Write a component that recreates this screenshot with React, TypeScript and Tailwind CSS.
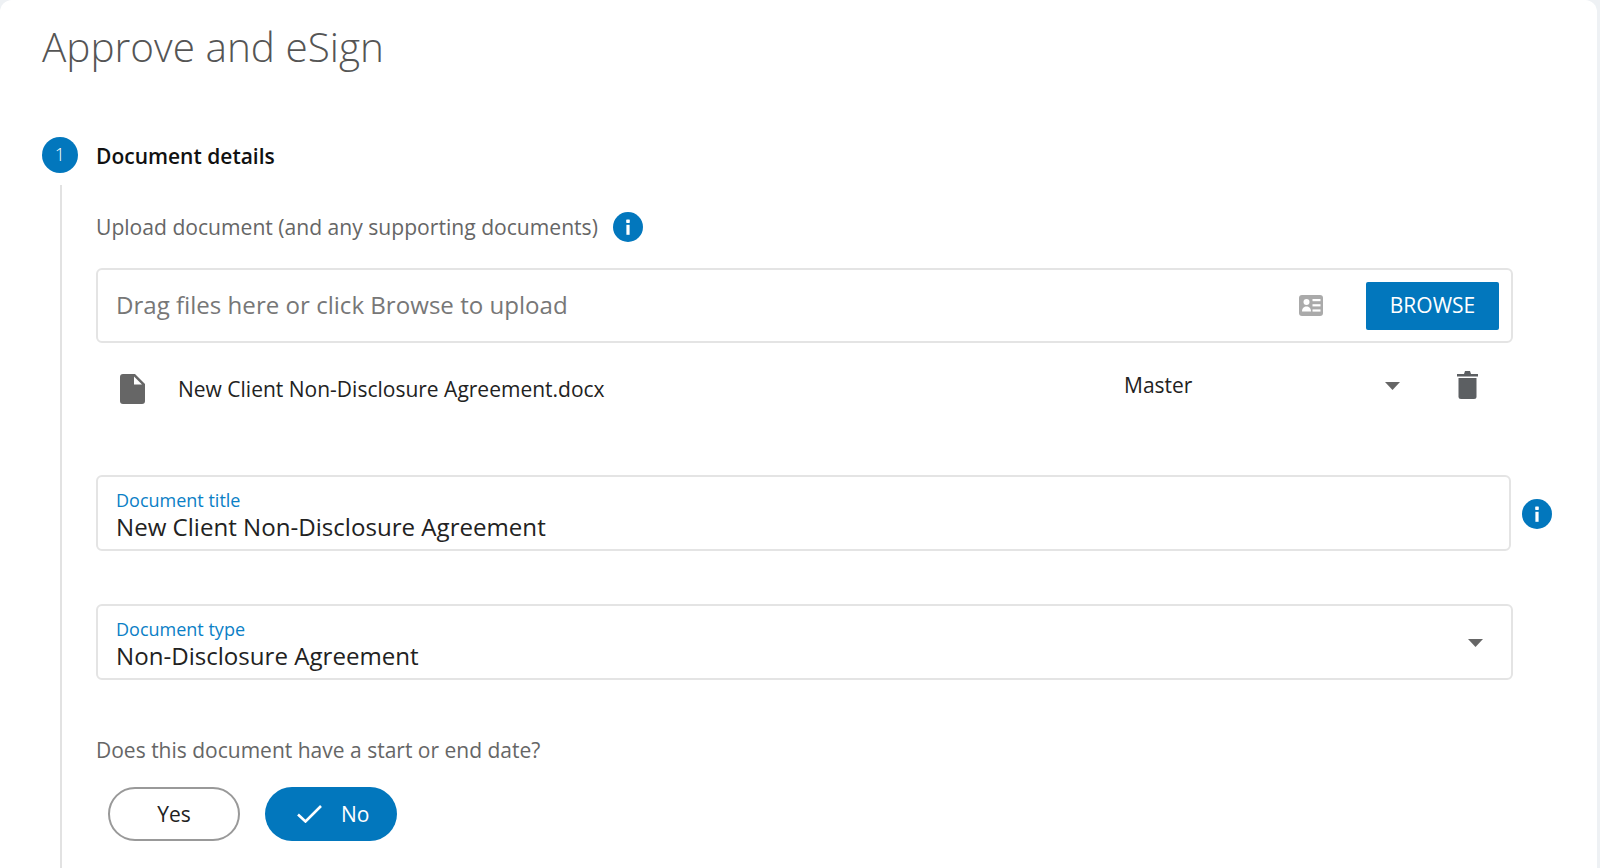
import React from "react";

const Info = ({ className }: { className: string }) => (
  <svg viewBox="0 0 30 30" className={className}>
    <circle cx="15" cy="15" r="15" fill="#0277bd" />
    <rect x="13.2" y="7.5" width="3.6" height="3.4" rx="0.6" fill="#fff" />
    <rect x="13.4" y="12.8" width="3.2" height="10" fill="#fff" />
  </svg>
);

const Caret = ({ className }: { className: string }) => (
  <svg viewBox="0 0 15 8" className={className}>
    <path d="M0 0H15L7.5 8Z" fill="#666" />
  </svg>
);

export default function App() {
  return (
    <div className="h-[868px] overflow-hidden bg-[#eef1f4] pr-[3px] font-['Open_Sans',sans-serif]">
      <div className="h-full rounded-t-[12px] bg-white pl-[42px]">
        <h1 className="pt-[21px] text-[40.5px] leading-[52px] font-light text-[#555]">Approve and eSign</h1>

        <div className="mt-[64px] flex h-[36px] items-center">
          <div className="flex h-[36px] w-[36px] items-center justify-center rounded-full bg-[#0277bd] pb-[2px] text-[18px] font-light text-white">1</div>
          <div className="ml-[18px] pt-[4px] text-[21px] font-semibold text-[#111]">Document details</div>
        </div>

        <div className="mt-[12px] ml-[18px] h-[700px] border-l-2 border-[#e2e2e2] pl-[34px]">
          <div className="flex h-[30px] items-center pt-[27px] box-content">
            <span className="mb-[1px] text-[21.1px] text-[#666]">Upload document (and any supporting documents)</span>
            <Info className="ml-[15px] h-[30px] w-[30px]" />
          </div>

          <div className="mt-[26px] flex h-[75px] w-[1417px] items-center rounded-[6px] border-2 border-[#e4e4e4] pr-[12px] pl-[18px]">
            <span className="flex-1 text-[24.1px] text-[#777]">Drag files here or click Browse to upload</span>
            <svg viewBox="0 0 24 21" className="mr-[43px] h-[21px] w-[24px]">
              <rect width="24" height="21" rx="3" fill="#aaa" />
              <circle cx="7.5" cy="7" r="3" fill="#fff" />
              <path d="M3 16.5c0-3.5 2-5 4.5-5s4.500 1.500 4.500 5z" fill="#fff" />
              <rect x="13.500" y="4" width="8" height="2.200" fill="#fff" />
              <rect x="13.500" y="9.200" width="8" height="2.200" fill="#fff" />
              <rect x="13.500" y="14.400" width="8" height="2.200" fill="#fff" />
            </svg>
            <button className="h-[48px] w-[133px] rounded-[2px] bg-[#0277bd] pt-[1px] text-[21px] text-white">BROWSE</button>
          </div>

          <div className="flex h-[95px] items-center">
            <svg viewBox="0 0 25 30" className="mb-[4px] ml-[24px] h-[30px] w-[25px]">
              <path d="M3 0H15L25 10V27a3 3 0 0 1-3 3H3a3 3 0 0 1-3-3V3a3 3 0 0 1 3-3Z" fill="#666" />
              <path d="M14 2.500L22 10.500H14Z" fill="#fff" />
            </svg>
            <span className="mb-[1px] ml-[33px] w-[946px] text-[21px] text-[#222]">New Client Non-Disclosure Agreement.docx</span>
            <span className="mb-[9px] w-[261px] text-[21px] text-[#222]">Master</span>
            <Caret className="mb-[9px] h-[8px] w-[15px]" />
            <svg viewBox="0 0 21 28" className="mb-[11px] ml-[57px] h-[28px] w-[21px]">
              <path d="M0 3H7L8 0H13L14 3H21V5.500H0Z" fill="#5c5f62" />
              <path d="M1.500 7H19.500V25.500a2.500 2.500 0 0 1-2.500 2.500H4a2.500 2.500 0 0 1-2.500-2.500Z" fill="#5c5f62" />
            </svg>
          </div>

          <div className="mt-[37px] flex items-center">
            <div className="h-[76px] w-[1415px] rounded-[6px] border-2 border-[#e4e4e4] pt-[11px] pl-[18px]">
              <div className="text-[18px] leading-[24px] text-[#0b80c6]">Document title</div>
              <div className="text-[24.1px] leading-[30px] text-[#222]">New Client Non-Disclosure Agreement</div>
            </div>
            <Info className="mt-[2px] ml-[11px] h-[30px] w-[30px]" />
          </div>

          <div className="mt-[53px] flex h-[76px] w-[1417px] items-start justify-between rounded-[6px] border-2 border-[#e4e4e4] pt-[11px] pr-[28px] pl-[18px]">
            <div>
              <div className="text-[18px] leading-[24px] text-[#0b80c6]">Document type</div>
              <div className="text-[24.1px] leading-[30px] text-[#222]">Non-Disclosure Agreement</div>
            </div>
            <Caret className="mt-[22px] h-[8px] w-[15px]" />
          </div>

          <div className="mt-[55px] text-[21px] leading-[30px] text-[#666]">Does this document have a start or end date?</div>

          <div className="mt-[22px] ml-[12px] flex gap-[25px]">
            <button className="h-[54px] w-[132px] rounded-full border-2 border-[#999] pt-[2px] text-[21px] text-[#222]">Yes</button>
            <button className="flex h-[54px] w-[132px] items-center rounded-full bg-[#0277bd] pt-[2px] pl-[32px] text-[21px] text-white">
              <svg viewBox="0 0 25 18" className="mb-[2px] h-[18px] w-[25px]">
                <path d="M1 9.500L8.500 16.500L24 1" fill="none" stroke="#fff" strokeWidth="2.600" />
              </svg>
              <span className="ml-[19px]">No</span>
            </button>
          </div>
        </div>
      </div>
    </div>
  );
}
